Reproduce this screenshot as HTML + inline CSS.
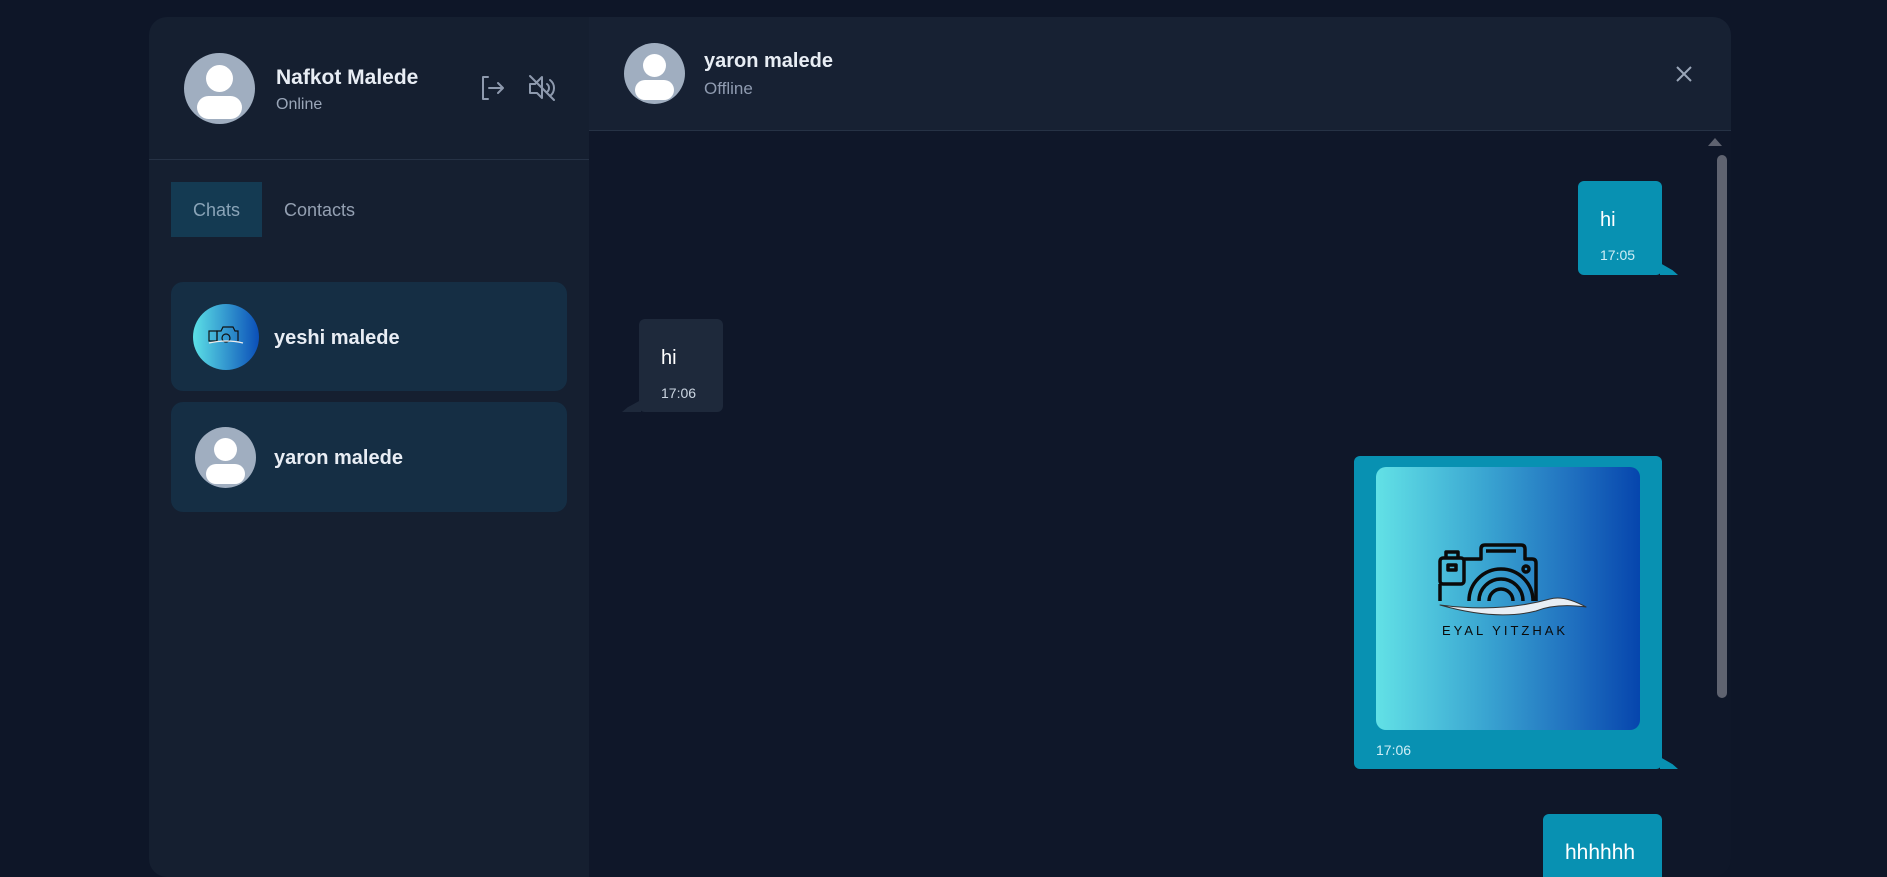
<!DOCTYPE html>
<html><head><meta charset="utf-8"><style>
*{box-sizing:border-box;margin:0;padding:0}
body{width:1887px;height:863px;overflow:hidden;background:#0e1628;font-family:"Liberation Sans",sans-serif;position:relative}
.wrap{position:absolute;left:149px;top:17px;width:1582px;height:860px;border-radius:18px;overflow:hidden;background:#0f172a}
.side{position:absolute;left:0;top:0;width:440px;height:100%;background:#151f30}
.main{position:absolute;left:440px;top:0;right:0;bottom:0;background:#0f1729}
.av{position:absolute;border-radius:50%;background:#a0aec0;overflow:hidden}
.av i{position:absolute;background:#fff;border-radius:50%}
.abs{position:absolute}
.bub{position:absolute;background:#0891b2;border-radius:6px;color:#fff}
.t{position:absolute;font-size:14px;color:#cfeef6}
</style></head><body>
<div class="wrap">
 <div class="side">
  <div class="av" style="left:35px;top:36px;width:71px;height:71px"><i style="left:22px;top:12px;width:27px;height:27px"></i><i style="left:13px;top:43px;width:45px;height:23px;border-radius:12px"></i></div>
  <div class="abs" style="left:127px;top:49px;font-size:21px;font-weight:bold;color:#e8edf4">Nafkot Malede</div>
  <div class="abs" style="left:127px;top:79px;font-size:16px;color:#9aa6b8">Online</div>
  <svg class="abs" style="left:331px;top:58px" width="26" height="26" viewBox="0 0 26 26" fill="none" stroke="#8e9aae" stroke-width="2" stroke-linecap="round" stroke-linejoin="round"><path d="M8 2H3v22h5M9 13h14M18 8l5 5-5 5"/></svg>
  <svg class="abs" style="left:379px;top:57px" width="28" height="28" viewBox="0 0 28 28" fill="none" stroke="#8e9aae" stroke-width="2" stroke-linecap="round" stroke-linejoin="round"><path d="M2 10h5l7-7v21l-5-5H2z"/><path d="M19 10a5 5 0 0 1 0 8M22 6a10 10 0 0 1 0 16"/><path d="M2 2l24 24"/></svg>
  <div class="abs" style="left:0;top:142px;width:440px;height:1px;background:#263245"></div>
  <div class="abs" style="left:22px;top:165px;width:91px;height:55px;background:#143a52;color:#8aa4b8;font-size:18px;line-height:57px;text-align:center">Chats</div>
  <div class="abs" style="left:135px;top:165px;color:#94a0b2;font-size:18px;line-height:57px">Contacts</div>
  <div class="abs" style="left:22px;top:265px;width:396px;height:109px;background:#152e44;border-radius:12px">
   <div class="abs" style="left:22px;top:22px;width:66px;height:66px;border-radius:50%;background:linear-gradient(90deg,#5ce0e6,#0b4fb8);overflow:hidden">
    <svg width="66" height="66" viewBox="0 0 66 66" fill="none" stroke="#111" stroke-width="1.2"><rect x="16" y="27" width="8" height="10"/><path d="M24 37V27h4l2-4h10l2 4h3v10"/><circle cx="33" cy="34" r="4"/><path d="M16 39q18-4 34 0" stroke="#eee"/></svg>
   </div>
   <div class="abs" style="left:103px;top:45px;font-size:20px;font-weight:bold;color:#e8edf4">yeshi malede</div>
  </div>
  <div class="abs" style="left:22px;top:385px;width:396px;height:110px;background:#152e44;border-radius:12px">
   <div class="av" style="left:24px;top:25px;width:61px;height:61px"><i style="left:19px;top:11px;width:23px;height:23px"></i><i style="left:11px;top:37px;width:39px;height:20px;border-radius:10px"></i></div>
   <div class="abs" style="left:103px;top:45px;font-size:20px;font-weight:bold;color:#e8edf4">yaron malede</div>
  </div>
 </div>
 <div class="main">
  <div class="abs" style="left:0;top:0;right:0;height:114px;background:#172133;border-bottom:1px solid #263245"></div>
  <div class="av" style="left:35px;top:26px;width:61px;height:61px"><i style="left:19px;top:11px;width:23px;height:23px"></i><i style="left:11px;top:37px;width:39px;height:20px;border-radius:10px"></i></div>
  <div class="abs" style="left:115px;top:33px;font-size:20px;font-weight:bold;color:#e8edf4">yaron malede</div>
  <div class="abs" style="left:115px;top:62px;font-size:17px;color:#8f9bb0">Offline</div>
  <svg class="abs" style="left:1085px;top:47px" width="20" height="20" viewBox="0 0 20 20" stroke="#9aa6b8" stroke-width="2"><path d="M3 3l14 14M17 3L3 17"/></svg>
  <div class="abs" style="left:1119px;top:121px;width:0;height:0;border-left:7px solid transparent;border-right:7px solid transparent;border-bottom:8px solid #5f6370"></div>
  <div class="abs" style="left:1128px;top:138px;width:10px;height:543px;border-radius:5px;background:#5f6370"></div>

  <div class="bub" style="left:989px;top:164px;width:84px;height:94px"><div class="abs" style="left:22px;top:28px;font-size:20px">hi</div><div class="t" style="left:22px;top:66px">17:05</div></div>
  <div class="abs" style="left:1071px;top:246px;width:18px;height:12px;background:#0891b2;clip-path:polygon(0 0,70% 60%,100% 100%,0 100%)"></div>

  <div class="bub" style="left:50px;top:302px;width:84px;height:93px;background:#1e293b"><div class="abs" style="left:22px;top:28px;font-size:20px">hi</div><div class="t" style="left:22px;top:66px;color:#cbd5e1">17:06</div></div>
  <div class="abs" style="left:33px;top:383px;width:19px;height:12px;background:#1e293b;clip-path:polygon(100% 0,30% 60%,0 100%,100% 100%)"></div>

  <div class="bub" style="left:765px;top:439px;width:308px;height:313px">
   <div class="abs" style="left:22px;top:11px;width:264px;height:263px;border-radius:10px;background:linear-gradient(90deg,#62e1e6,#3ba7d2 40%,#1f6fbf 75%,#0645ad)">
    <svg class="abs" style="left:0;top:0" width="264" height="263" viewBox="0 0 264 263" fill="none" stroke="#0a0a0a" stroke-width="3.5" stroke-linejoin="round">
     <rect x="64" y="91" width="24" height="26" rx="3"/><rect x="72" y="98" width="8" height="5"/><path d="M70 91v-6h12v6"/><path d="M64 117v17"/>
     <path d="M88 92h17v-10q0-4 4-4h36q4 0 4 4v10h7q4 0 4 4v38"/><path d="M110 84h30"/><circle cx="150" cy="102" r="3"/>
     <path d="M93 134a32 32 0 0 1 64 0"/><path d="M103 134a22 22 0 0 1 44 0"/><path d="M113 134a12 12 0 0 1 24 0"/>
     <path d="M64 138q60 8 110-6q14-4 36 8q-30-4-50 4q-40 10-96-6z" fill="#e8eef4" stroke="#333" stroke-width="1"/>
     <text x="66" y="168" fill="#0a0a0a" stroke="none" font-family="Liberation Sans,sans-serif" font-size="13" letter-spacing="3">EYAL YITZHAK</text>
    </svg>
   </div>
   <div class="t" style="left:22px;top:286px;color:#cfeef6">17:06</div>
  </div>
  <div class="abs" style="left:1071px;top:740px;width:18px;height:12px;background:#0891b2;clip-path:polygon(0 0,70% 60%,100% 100%,0 100%)"></div>

  <div class="bub" style="left:954px;top:797px;width:119px;height:80px"><div class="abs" style="left:22px;top:27px;font-size:21px">hhhhhh</div></div>
 </div>
</div>
</body></html>
